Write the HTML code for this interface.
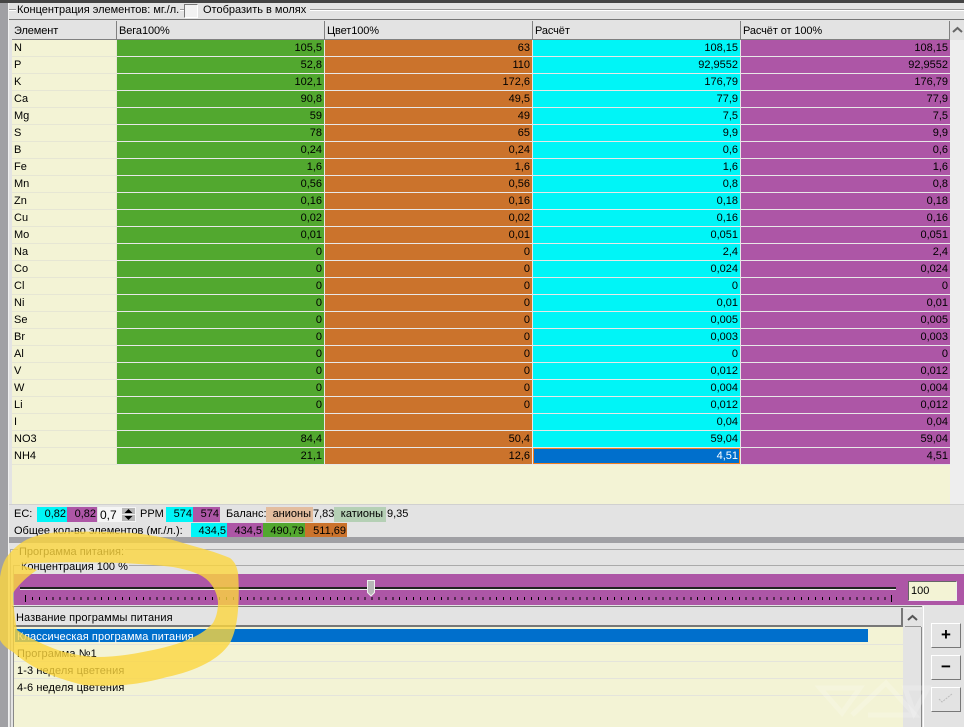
<!DOCTYPE html>
<html><head><meta charset="utf-8"><style>
html,body{margin:0;padding:0}
body{width:964px;height:727px;overflow:hidden;background:#e3e3e3;position:relative;font:11px "Liberation Sans",sans-serif;color:#000}
.a{position:absolute;white-space:nowrap}
table{position:absolute;left:12px;top:21px;border-collapse:separate;border-spacing:0;table-layout:fixed;width:938px}
th{height:19px;padding:1px 0 0 2px;background:#e3e3e3;font-weight:normal;text-align:left;border-right:1px solid #808080;border-bottom:1px solid #808080;box-sizing:border-box;letter-spacing:-.1px}
td{height:17px;padding:1px 2px 0 0;box-sizing:border-box;border-bottom:1px solid #e8e8e8;border-right:1px solid #e8e8e8;text-align:right;overflow:hidden;line-height:15px}
td:first-child{background:#f3f3d5;text-align:left;padding-left:2px;border-color:#e6e6d4}
td:nth-child(2){background:#52a82f}td:nth-child(3){background:#cb732c}td:nth-child(4){background:#00f5f7}td:nth-child(5){background:#ad56a6;border-right:0}
td.s,td.s:nth-child(4){background:#006fcc;color:#fff;box-shadow:inset 0 0 0 1px #f08020}
.c{position:absolute;height:17px;line-height:17px;text-align:right;box-sizing:border-box;padding-right:1px}
.l{position:absolute;top:507px;line-height:15px;white-space:nowrap}
.t{position:absolute;top:523px;height:14px;line-height:16px;text-align:right;box-sizing:border-box;padding-right:1px}
.r{position:absolute;left:14px;width:889px;height:17px;border-bottom:1px solid #e4e4dc;box-sizing:border-box;padding-left:3px;line-height:19px;letter-spacing:.1px}
.b{position:absolute;left:931px;width:30px;height:25px;background:#e3e3e3;border:1px solid;border-color:#fff #777 #777 #fff;box-sizing:border-box;text-align:center;font:bold 17px/21px "Liberation Sans",sans-serif}
</style></head><body>
<div class="a" style="left:0;top:0;width:964px;height:3px;background:#444"></div>
<div class="a" style="left:0;top:3px;width:8px;height:724px;background:#a0a0a4"></div>
<div class="a" style="left:8px;top:3px;width:1px;height:724px;background:#f0f0f0"></div>
<div class="a" style="left:9px;top:9px;width:955px;height:1px;background:#999"></div>
<div class="a" style="left:9px;top:10px;width:955px;height:1px;background:#fff"></div>
<div class="a" style="left:9px;top:19px;width:955px;height:1px;background:#777"></div>
<div class="a" style="left:16px;top:3px;background:#e3e3e3;padding:0 1px;line-height:15px">Концентрация элементов: мг./л.</div>
<div class="a" style="left:184px;top:4px;width:12px;height:12px;background:#f2f2f2;border:1px solid;border-color:#777 #fff #fff #777"></div>
<div class="a" style="left:198px;top:3px;background:#e3e3e3;padding:0 4px 0 5px;line-height:15px">Отобразить в молях</div>
<div class="a" style="left:12px;top:40px;width:938px;height:465px;background:#f3f3d5"></div>
<table>
<colgroup><col style="width:105px"><col style="width:208px"><col style="width:208px"><col style="width:208px"><col style="width:209px"></colgroup>
<tr><th>Элемент</th><th>Вега100%</th><th>Цвет100%</th><th>Расчёт</th><th>Расчёт от 100%</th></tr>
<tr><td>N</td><td>105,5</td><td>63</td><td>108,15</td><td>108,15</td></tr>
<tr><td>P</td><td>52,8</td><td>110</td><td>92,9552</td><td>92,9552</td></tr>
<tr><td>K</td><td>102,1</td><td>172,6</td><td>176,79</td><td>176,79</td></tr>
<tr><td>Ca</td><td>90,8</td><td>49,5</td><td>77,9</td><td>77,9</td></tr>
<tr><td>Mg</td><td>59</td><td>49</td><td>7,5</td><td>7,5</td></tr>
<tr><td>S</td><td>78</td><td>65</td><td>9,9</td><td>9,9</td></tr>
<tr><td>B</td><td>0,24</td><td>0,24</td><td>0,6</td><td>0,6</td></tr>
<tr><td>Fe</td><td>1,6</td><td>1,6</td><td>1,6</td><td>1,6</td></tr>
<tr><td>Mn</td><td>0,56</td><td>0,56</td><td>0,8</td><td>0,8</td></tr>
<tr><td>Zn</td><td>0,16</td><td>0,16</td><td>0,18</td><td>0,18</td></tr>
<tr><td>Cu</td><td>0,02</td><td>0,02</td><td>0,16</td><td>0,16</td></tr>
<tr><td>Mo</td><td>0,01</td><td>0,01</td><td>0,051</td><td>0,051</td></tr>
<tr><td>Na</td><td>0</td><td>0</td><td>2,4</td><td>2,4</td></tr>
<tr><td>Co</td><td>0</td><td>0</td><td>0,024</td><td>0,024</td></tr>
<tr><td>Cl</td><td>0</td><td>0</td><td>0</td><td>0</td></tr>
<tr><td>Ni</td><td>0</td><td>0</td><td>0,01</td><td>0,01</td></tr>
<tr><td>Se</td><td>0</td><td>0</td><td>0,005</td><td>0,005</td></tr>
<tr><td>Br</td><td>0</td><td>0</td><td>0,003</td><td>0,003</td></tr>
<tr><td>Al</td><td>0</td><td>0</td><td>0</td><td>0</td></tr>
<tr><td>V</td><td>0</td><td>0</td><td>0,012</td><td>0,012</td></tr>
<tr><td>W</td><td>0</td><td>0</td><td>0,004</td><td>0,004</td></tr>
<tr><td>Li</td><td>0</td><td>0</td><td>0,012</td><td>0,012</td></tr>
<tr><td>I</td><td></td><td></td><td>0,04</td><td>0,04</td></tr>
<tr><td>NO3</td><td>84,4</td><td>50,4</td><td>59,04</td><td>59,04</td></tr>
<tr><td>NH4</td><td>21,1</td><td>12,6</td><td class="s">4,51</td><td>4,51</td></tr>
</table>
<!-- table scrollbar -->
<div class="a" style="left:950px;top:21px;width:14px;height:19px;background:#e3e3e3"></div>
<svg class="a" style="left:952px;top:26px" width="11" height="8"><path d="M1 6l4.500-4 4.500 4" fill="none" stroke="#666" stroke-width="2"/></svg>
<div class="a" style="left:950px;top:40px;width:14px;height:465px;background:#eeeeee"></div>
<div class="a" style="left:9px;top:504px;width:955px;height:1px;background:#d0d0d0"></div>
<!-- EC row -->
<div class="l" style="left:14px">EC:</div>
<div class="c" style="left:37px;top:507px;width:30px;height:15px;line-height:15px;background:#00f5f7">0,82</div>
<div class="c" style="left:67px;top:507px;width:30px;height:15px;line-height:15px;background:#ad56a6">0,82</div>
<div class="a" style="left:98px;top:507px;width:38px;height:15px;background:#f5f5f5;font-size:12px;line-height:17px;padding-left:2px;box-sizing:border-box">0,7</div>
<svg class="a" style="left:122px;top:508px" width="13" height="13" viewBox="0 0 13 13"><rect width="13" height="13" fill="#b8b8b8"/><rect y="6" width="13" height="1" fill="#f0f0f0"/><path d="M6.500 1l4 4h-8zM2.500 8h8l-4 4z" fill="#000"/></svg>
<div class="l" style="left:140px">PPM</div>
<div class="c" style="left:166px;top:507px;width:27px;height:15px;line-height:15px;background:#00f5f7">574</div>
<div class="c" style="left:193px;top:507px;width:27px;height:15px;line-height:15px;background:#ad56a6">574</div>
<div class="l" style="left:226px">Баланс:</div>
<div class="c" style="left:266px;top:507px;width:47px;height:15px;line-height:15px;background:#e3bd9e;padding-right:2px">анионы</div>
<div class="l" style="left:313px">7,83</div>
<div class="c" style="left:334px;top:507px;width:52px;height:15px;line-height:15px;background:#b5d0b5;padding-right:3px">катионы</div>
<div class="l" style="left:387px">9,35</div>
<!-- totals row -->
<div class="a" style="left:14px;top:523px;line-height:16px">Общее кол-во элементов (мг./л.):</div>
<div class="t" style="left:191px;width:36px;background:#00f5f7">434,5</div>
<div class="t" style="left:227px;width:36px;background:#ad56a6">434,5</div>
<div class="t" style="left:263px;width:42px;background:#52a82f">490,79</div>
<div class="t" style="left:305px;width:42px;background:#cb732c">511,69</div>
<div class="a" style="left:9px;top:537px;width:955px;height:6px;background:#a0a0a4"></div>
<!-- groups -->
<div class="a" style="left:10px;top:549px;width:954px;height:1px;background:#aaa"></div>
<div class="a" style="left:10px;top:549px;width:1px;height:178px;background:#aaa"></div>
<div class="a" style="left:18px;top:545px;background:#e3e3e3;padding:0 1px;line-height:15px">Программа питания:</div>
<div class="a" style="left:13px;top:565px;width:951px;height:1px;background:#aaa"></div>
<div class="a" style="left:13px;top:565px;width:1px;height:40px;background:#aaa"></div>
<div class="a" style="left:20px;top:560px;background:#e3e3e3;padding:0 1px;line-height:14px">Концентрация 100 %</div>
<div class="a" style="left:14px;top:574px;width:950px;height:31px;background:#ad56a6"></div>
<div class="a" style="left:20px;top:587px;width:876px;height:2px;background:#222;border-bottom:1px solid #eee"></div>
<svg class="a" style="left:20px;top:595px" width="880" height="9" viewBox="0 0 880 9" shape-rendering="crispEdges">
<path d="M5.500 0v7" stroke="#000" stroke-width="1"/>
<path d="M5 3.500H872" stroke="#000" stroke-width="3" stroke-dasharray="1 5.930" fill="none"/>
<path d="M871.500 0v7" stroke="#000" stroke-width="1"/>
</svg>
<svg class="a" style="left:366px;top:579px" width="10" height="19" viewBox="0 0 10 19"><path d="M1.500 1.500h7v12l-3.500 3.500-3.500-3.500z" fill="#b8b8b8" stroke="#f0f0f0"/></svg>
<div class="a" style="left:908px;top:581px;width:49px;height:20px;background:#f3f3d5;border:1px solid;border-color:#666 #eee #eee #666;box-sizing:border-box;padding-left:2px;line-height:18px">100</div>
<!-- list -->
<div class="a" style="left:12px;top:606px;width:910px;height:1px;background:#777"></div>
<div class="a" style="left:13px;top:607px;width:1px;height:120px;background:#888"></div>
<div class="a" style="left:14px;top:608px;width:889px;height:19px;background:#e3e3e3;border-bottom:2px solid #777;border-right:2px solid #777;box-sizing:border-box;padding-left:2px;line-height:21px;letter-spacing:.1px">Название программы питания</div>
<div class="a" style="left:14px;top:627px;width:889px;height:100px;background:#f3f3d5"></div>
<div class="r" style="top:628px"><span class="a" style="left:1px;top:1px;width:853px;height:13px;background:#006fcc"></span><span style="position:relative;color:#fff">Классическая программа питания</span></div>
<div class="r" style="top:645px">Программа №1</div>
<div class="r" style="top:662px">1-3 неделя цветения</div>
<div class="r" style="top:679px">4-6 неделя цветения</div>
<!-- list scrollbar -->
<div class="a" style="left:904px;top:608px;width:18px;height:119px;background:#e3e3e3;border-top:1px solid #eee;box-sizing:border-box"></div>
<svg class="a" style="left:907px;top:614px" width="11" height="8"><path d="M1 6l4.500-4 4.500 4" fill="none" stroke="#555" stroke-width="2"/></svg>
<div class="a" style="left:905px;top:626px;width:16px;height:1px;background:#999"></div>
<div class="a" style="left:921px;top:627px;width:1px;height:100px;background:#888"></div>
<div class="a" style="left:923px;top:606px;width:1px;height:121px;background:#fff"></div>
<div class="b" style="top:623px">+</div>
<div class="b" style="top:655px">−</div>
<div class="b" style="top:687px"><svg width="18" height="14" style="margin-top:3px;display:block;margin-left:5px" viewBox="0 0 18 14"><path d="M2 8l3 3 10-8" fill="none" stroke="#bbb" stroke-width="1" stroke-dasharray="2 1"/></svg></div>
<!-- watermark -->
<svg class="a" style="left:800px;top:675px" width="164" height="52" viewBox="0 0 164 52">
<g fill="none" stroke="#fff" stroke-opacity=".2" stroke-width="5">
<path d="M20 13H60L42 38z"/>
<path d="M52 40L86 8L115 40H68"/>
<path d="M105 13H128L114 38z"/>
</g></svg>
<!-- highlighter -->
<svg class="a" style="left:0;top:0" width="964" height="727" viewBox="0 0 964 727">
<path fill="#fbd63f" fill-opacity=".8" fill-rule="evenodd" d="M0 577C2 565 5 558 10 553C16 546 24 540 33 537C45 533 55 532 67 532C90 531 112 532 133 533C152 535 168 538 183 543C200 548 216 552 230 558C235 562 237 567 238 573C239 585 239 598 238 610C237 622 235 633 230 643C224 652 216 658 207 663C194 670 181 674 167 677C152 681 138 684 123 685C110 686 96 686 83 685C68 681 54 677 40 670C30 665 21 659 13 652C6 648 2 644 0 640ZM20 565C26 564 29 563 33 563C63 562 93 562 123 563C140 564 157 565 173 567C183 569 192 571 200 575C206 578 210 582 213 587C216 592 218 598 218 603C218 611 216 618 213 623C206 631 197 636 187 640C173 646 158 649 143 652C128 655 112 657 97 657C80 656 64 653 50 647C38 642 27 637 17 630C15 620 14 610 13 600C13 596 13 594 13 593C19 584 28 576 37 570C31 568 25 566 20 565Z"/>
</svg>
</body></html>
